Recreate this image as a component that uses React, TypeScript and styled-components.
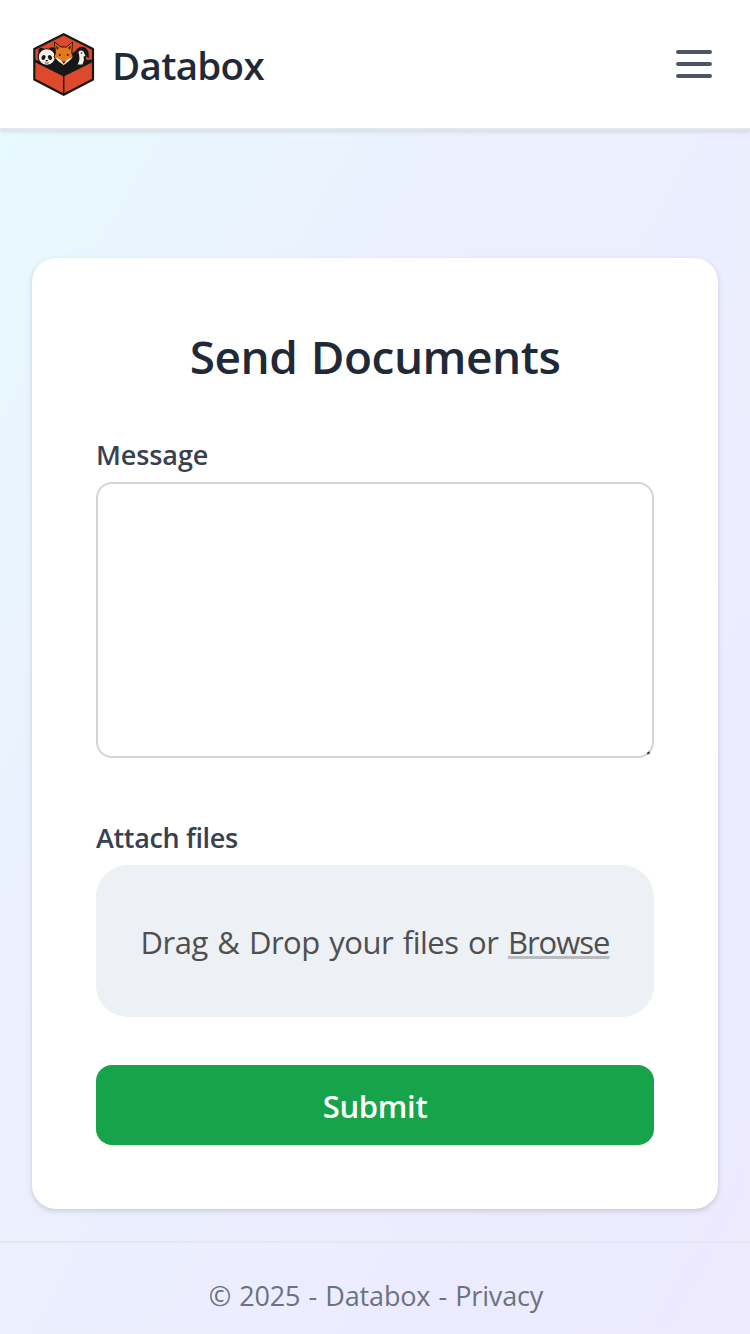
import React from "react";
import styled, { createGlobalStyle } from "styled-components";

const Global = createGlobalStyle`
  *, *::before, *::after { box-sizing: border-box; }
  body {
    margin: 0;
    font-family: "Segoe UI", "Open Sans", "Noto Sans", sans-serif;
    color: #1f2937;
  }
`;

const Page = styled.div`
  display: flex;
  flex-direction: column;
  height: 1334px;
  overflow: hidden;
  background: linear-gradient(to bottom right, #e7faff, #ebf1fe 34%, #ede9fe);
`;

const Header = styled.header`
  display: flex;
  align-items: center;
  justify-content: space-between;
  flex: none;
  height: 130px;
  padding: 0 32px;
  background: #fff;
  border-bottom: 2px solid #e5e7eb;
  box-shadow: 0 2px 4px rgba(0, 0, 0, 0.1);
`;

const Brand = styled.a`
  display: flex;
  align-items: center;
  gap: 16px;
`;

const BrandName = styled.span`
  padding-top: 2px;
  font-size: 38.5px;
  font-weight: 580;
  letter-spacing: -0.7px;
`;

const MenuButton = styled.button`
  display: flex;
  padding: 0;
  border: 0;
  background: none;
  color: #4b5563;
`;

const Main = styled.main`
  flex: 1;
  padding: 128px 32px 32px;
`;

const Card = styled.form`
  display: flex;
  flex-direction: column;
  height: 951px;
  padding: 64px;
  border-radius: 24px;
  background: #fff;
  box-shadow: 0 2px 6px rgba(0, 0, 0, 0.1), 0 2px 4px rgba(0, 0, 0, 0.06);
`;

const Title = styled.h1`
  margin: 0 0 48px;
  height: 64px;
  line-height: 68px;
  font-size: 46px;
  font-weight: 580;
  letter-spacing: -0.5px;
  word-spacing: 2px;
  text-align: center;
  white-space: nowrap;
`;

const Label = styled.label<{ $spacing?: number }>`
  height: 40px;
  margin-bottom: 8px;
  line-height: 42px;
  font-size: 27px;
  font-weight: 580;
  letter-spacing: ${(p) => p.$spacing ?? 0}px;
  color: #374151;
`;

const MessageBox = styled.div`
  position: relative;
  height: 276px;
  margin-bottom: 59px;

  &::after {
    content: "";
    position: absolute;
    right: 4px;
    bottom: 4px;
    width: 3px;
    height: 2px;
    background: #3f4145;
    transform: rotate(-35deg);
  }
`;

const Message = styled.textarea`
  display: block;
  width: 100%;
  height: 100%;
  border: 2px solid #d1d5db;
  border-radius: 16px;
  background: #fff;
  resize: none;
  outline: none;
`;

const DropZone = styled.div`
  display: flex;
  align-items: center;
  justify-content: center;
  height: 152px;
  padding-top: 2px;
  margin-bottom: 48px;
  border-radius: 32px;
  background: #edf0f4;
  color: #4f4f4f;
  font-size: 31px;
  letter-spacing: -0.5px;
  word-spacing: 2px;
  white-space: pre;
`;

const Browse = styled.span`
  letter-spacing: -1px;
  text-decoration: underline;
  text-decoration-color: #b9bcbe;
  text-decoration-thickness: 3px;
  text-underline-offset: 2px;
  text-decoration-skip-ink: none;
`;

const Submit = styled.button`
  height: 80px;
  padding: 2px 0 0;
  border: 0;
  border-radius: 16px;
  background: #16a34a;
  color: #fff;
  font-family: inherit;
  font-size: 31px;
  font-weight: 600;
  letter-spacing: -0.3px;
`;

const Footer = styled.footer`
  flex: none;
  height: 93px;
  padding-left: 2px;
  border-top: 2px solid #e5e7eb;
  line-height: 106px;
  font-size: 27px;
  letter-spacing: -0.15px;
  word-spacing: 1.3px;
  text-align: center;
  color: #6b7280;
`;

const Logo = () => (
  <svg width="64" height="64" viewBox="0 0 64 64">
    <path d="M31.700 2.200 61 17v30.500L31.700 62.800 2.300 47.500V17Z" fill="#dc492d" stroke="#171717" strokeWidth="2.200" strokeLinejoin="round" />
    {/* box interior and rim */}
    <path d="M2.500 27.500 9 29.500 22 25 31 27 42 20 46 18 55 28 61 27.500V30L31.700 44.500 2.500 30Z" fill="#171717" />
    <path d="M31.700 43V62" stroke="#171717" strokeWidth="1.500" />
    {/* panda */}
    <circle cx="9.500" cy="19" r="3.200" fill="#171717" />
    <circle cx="20" cy="18.500" r="3.200" fill="#171717" />
    <ellipse cx="14.800" cy="25" rx="8.600" ry="8.200" fill="#f5f0e5" stroke="#171717" strokeWidth="1.100" />
    <ellipse cx="11.500" cy="25.500" rx="1.900" ry="2.500" transform="rotate(30 11.500 25.500)" fill="#171717" />
    <ellipse cx="18" cy="25.500" rx="1.900" ry="2.500" transform="rotate(-30 18 25.500)" fill="#171717" />
    <path d="M13.300 28h3l-1.500 1.700Z" fill="#171717" />
    <path d="M12.800 30.700q2 1 4 0" fill="none" stroke="#171717" strokeWidth=".7" />
    {/* fox */}
    <path d="M22.400 10 29 15h5.500L40.500 10 39.800 21 41.300 25 37 29 31.700 33.500 26 29 22 25 23.500 21Z" fill="#e8781e" stroke="#171717" strokeWidth="1" strokeLinejoin="round" />
    <path d="M24 13 27 16 24.800 18Z M39 13 36 16 38.200 18Z" fill="#3a2116" />
    <path d="M23 25.500 27.500 27 31.700 31.500 36 27 40.500 25.500 37 29 31.700 33 26 29Z" fill="#f5f0e5" />
    <circle cx="27.800" cy="23" r="1" fill="#171717" />
    <circle cx="35.700" cy="23" r="1" fill="#171717" />
    <path d="M30 29.500h3.500l-1.700 2.200Z" fill="#171717" />
    {/* goose */}
    <path d="M41 31Q41 22 44.500 17.500 48 13.300 53 15.500 56.500 17.500 56.700 22L57 26 54 24.500 54 32Z" fill="#171717" />
    <path d="M46.300 20Q49 17.500 51.500 19.500L53.500 24 51.500 24.500 52 28 50.500 32.500H45.500Q49 27 46.300 20Z" fill="#f5f0e5" />
    <circle cx="49.500" cy="21" r=".8" fill="#171717" />
  </svg>
);

export default function App() {
  return (
    <>
      <Global />
      <Page>
        <Header>
          <Brand>
            <Logo />
            <BrandName>Databox</BrandName>
          </Brand>
          <MenuButton aria-label="Menu">
            <svg width="48" height="48" viewBox="0 0 24 24" fill="none" stroke="currentColor" strokeWidth="2" strokeLinecap="round">
              <path d="M4 6h16M4 12h16M4 18h16" />
            </svg>
          </MenuButton>
        </Header>
        <Main>
          <Card>
            <Title>Send Documents</Title>
            <Label $spacing={-0.1}>Message</Label>
            <MessageBox><Message /></MessageBox>
            <Label $spacing={-0.35}>Attach files</Label>
            <DropZone>
              <span>Drag &amp; Drop your files or <Browse>Browse</Browse></span>
            </DropZone>
            <Submit type="button">Submit</Submit>
          </Card>
        </Main>
        <Footer>© 2025 - Databox - Privacy</Footer>
      </Page>
    </>
  );
}
